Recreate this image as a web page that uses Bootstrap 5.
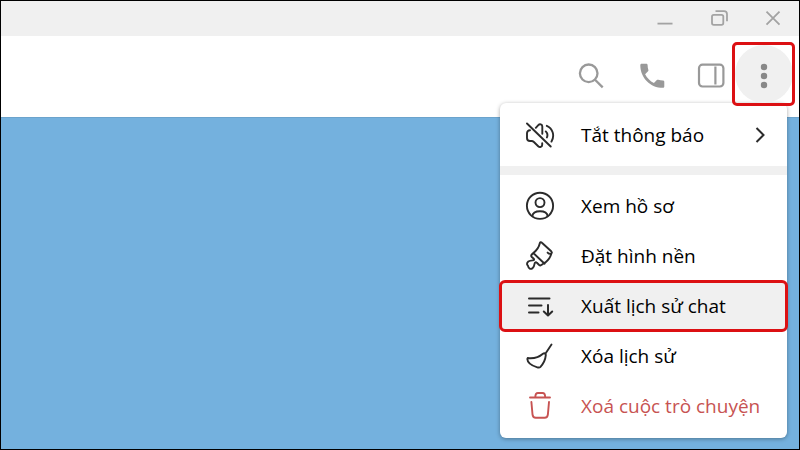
<!DOCTYPE html>
<html lang="vi">
<head>
<meta charset="utf-8">
<meta name="viewport" content="width=device-width, initial-scale=1">
<title>Chat</title>
<link href="https://cdn.jsdelivr.net/npm/bootstrap@5.3.0/dist/css/bootstrap.min.css" rel="stylesheet">
<style>
  body { font-family: "Open Sans", "Noto Sans", sans-serif; }
  .app-window { border: 1px solid #000; background: #74b1de; }
  .title-strip { background: #f0f0f0; height: 35px; padding-right: 1px; color: #a3a3a3; }
  .win-btn { width: 50px; height: 35px; color: inherit; }
  .chat-header { height: 81px; padding: 0 4px 5px 0; color: #999; }
  .chat-area { border-top: 1px solid #6ba3cc; }
  .tool-btn { width: 40px; height: 40px; color: inherit; }
  .tools { gap: 20px; margin-right: 1px; }
  .marked { outline: 3px solid #dc1013; outline-offset: -3px; border-radius: 5px; }
  .more-btn { width: 63px; height: 64px; color: #888; z-index: 2; }
  .more-dot-bg { width: 58px; height: 58px; background: #f0f0f0; }
  .chat-menu { top: 67px; right: 12px; width: 287px; border-radius: 6px; box-shadow: 0 1px 4px rgba(0, 0, 0, .35); padding: 7px 0; }
  .menu-row { height: 50px; padding: 0 20px 0 25px; gap: 26px; font-size: 19px; line-height: 28px; color: #000; }
  .menu-row svg { color: #2b2b2b; }
  .menu-row.danger, .menu-row.danger svg { color: #c75352; }
  .menu-row.marked { background: #f0f0f0; outline-offset: -2px; border-radius: 5px; }
  .menu-gap { height: 9px; margin: 6px 0; background: #f0f0f0; }
</style>
<script src="https://cdn.jsdelivr.net/npm/bootstrap@5.3.0/dist/js/bootstrap.bundle.min.js"></script>
</head>
<body>
<div class="app-window min-vh-100 d-flex flex-column">
  <div class="title-strip d-flex justify-content-end gap-1">
    <button type="button" class="win-btn btn border-0 p-0 d-flex align-items-center justify-content-center" aria-label="Minimize">
      <svg width="20" height="20" fill="none" stroke="currentColor" stroke-width="1.8"><path d="M2.5 14.6h15"/></svg>
    </button>
    <button type="button" class="win-btn btn border-0 p-0 d-flex align-items-center justify-content-center" aria-label="Restore">
      <svg width="20" height="20" fill="none" stroke="currentColor" stroke-width="1.8"><rect x="3" y="5.800" width="11.3" height="10" rx="1.8"/><path d="M6.500 2.200h8.500a3 3 0 0 1 3 3v7"/></svg>
    </button>
    <button type="button" class="win-btn btn border-0 p-0 d-flex align-items-center justify-content-center" aria-label="Close">
      <svg width="20" height="20" fill="none" stroke="currentColor" stroke-width="1.8"><path d="M3.500 2.700l13 13M16.500 2.700L3.500 15.700"/></svg>
    </button>
  </div>

  <header class="chat-header bg-white position-relative d-flex align-items-center justify-content-end">
    <div class="tools d-flex">
      <button type="button" class="tool-btn btn border-0 p-0 d-flex align-items-center justify-content-center" aria-label="Search">
        <svg width="30" height="30" fill="none" stroke="currentColor" stroke-width="2.300"><circle cx="12.700" cy="14.300" r="8.800"/><path d="M19 20.700l7.700 7.700"/></svg>
      </button>
      <button type="button" class="tool-btn btn border-0 p-0 d-flex align-items-center justify-content-center" aria-label="Call">
        <svg width="30" height="30" fill="currentColor"><path transform="translate(.3 .8) scale(1.333)" d="M6.620 10.790c1.440 2.830 3.760 5.140 6.590 6.590l2.200-2.200c.27-.27.67-.36 1.020-.24 1.120.37 2.330.57 3.570.57.550 0 1 .45 1 1V20c0 .55-.45 1-1 1C10.610 21 3 13.390 3 4c0-.55.450-1 1-1h3.500c.55 0 1 .45 1 1 0 1.250.2 2.450.57 3.570.11.350.03.740-.25 1.020l-2.200 2.200z"/></svg>
      </button>
      <button type="button" class="tool-btn btn border-0 p-0 d-flex align-items-center justify-content-center" aria-label="Side panel">
        <svg width="30" height="30" fill="none" stroke="currentColor" stroke-width="2.200"><rect x="3" y="5.700" width="24.400" height="21.800" rx="3.500"/><path d="M19.400 7.500v18"/></svg>
      </button>
    </div>
    <button type="button" class="more-btn marked btn border-0 p-0 position-relative d-flex align-items-center justify-content-center" aria-label="More" aria-expanded="true">
      <span class="more-dot-bg rounded-circle d-flex align-items-center justify-content-center">
        <svg width="10" height="30" fill="currentColor"><circle cx="5" cy="8" r="3.200"/><circle cx="5" cy="17" r="3.200"/><circle cx="5" cy="26" r="3.200"/></svg>
      </span>
    </button>

    <div class="chat-menu bg-white position-absolute">
      <button type="button" class="menu-row btn border-0 rounded-0 w-100 d-flex align-items-center text-start">
        <svg width="30" height="30" fill="none" stroke="currentColor" stroke-width="1.900" stroke-linecap="round" stroke-linejoin="round"><path d="M2 3.500L25.700 26.500M5 10.300c-2 0-3 1-3 3v4.700c0 2 1 3 3 3h1.700c1 0 1.500.4 2.200 1l4.300 4.200c1.600 1.500 4 .8 4-1.500v-1.500M10.800 7.800l2.500-2.700c1.500-1.500 4-.8 4 1.500v7.200M20.800 11.400c1.800 1.800 2 4 1.100 6.100M21.800 5.800c5.800 2.300 8.200 9.800 4.700 15.800"/></svg>
        <span class="flex-grow-1">Tắt thông báo</span>
        <svg width="14" height="20" fill="none" stroke="currentColor" stroke-width="2"><path d="M3.500 3l7 7-7 7"/></svg>
      </button>
      <div class="menu-gap"></div>
      <button type="button" class="menu-row btn border-0 rounded-0 w-100 d-flex align-items-center text-start">
        <svg width="30" height="30" fill="none" stroke="currentColor" stroke-width="1.900"><circle cx="15" cy="14.800" r="13.100"/><circle cx="15" cy="11.600" r="4.500"/><path d="M7.300 25.300c.4-3.200 3.200-5 7.700-5s7.300 1.800 7.700 5"/></svg>
        <span>Xem hồ sơ</span>
      </button>
      <button type="button" class="menu-row btn border-0 rounded-0 w-100 d-flex align-items-center text-start">
        <svg width="30" height="30" fill="none" stroke="currentColor" stroke-width="1.900" stroke-linecap="round" stroke-linejoin="round"><path d="M8.300 12c3.400-2.600 5.800-6.200 6.500-9.700.3-1.300 1.300-1.400 2.100-.6l9.300 8.600c1.200 1.200.7 2.500-.9 2.500-1 0-2-.4-2.700-1.200M26.300 12.500c-.6 3.400-2.800 6.500-6.200 9.300M8.300 12l11.300 10.700M8.300 12l-1.500 1.500c-.8.900-.8 1.700 0 2.500l1.700 1.500c1 1 .6 1.800-.7 1.900-3.600.2-5.800 1.400-5.800 3.700 0 .8.700 1 1 1.800.5 2.700 2.600 3.800 4.500 2.300 1.500-1.200 1.900-3 2.100-4.500.2-1.500 1.300-1.900 2.300-.9l2 1.900c1 .9 2 .9 2.900 0l2.800-1.900"/></svg>
        <span>Đặt hình nền</span>
      </button>
      <button type="button" class="menu-row marked btn border-0 w-100 d-flex align-items-center text-start">
        <svg width="30" height="30" fill="none" stroke="currentColor" stroke-width="2" stroke-linecap="round" stroke-linejoin="round"><path d="M4 7.500h20.500M4 14.500h12.500M4 21.500h9.500M23 14v10.300M18.800 20.500l4.200 4 4.200-4"/></svg>
        <span>Xuất lịch sử chat</span>
      </button>
      <button type="button" class="menu-row btn border-0 rounded-0 w-100 d-flex align-items-center text-start">
        <svg width="30" height="30" fill="none" stroke="currentColor" stroke-width="1.900" stroke-linecap="round" stroke-linejoin="round"><path d="M26.500 3.500l-6.300 9.500M2.700 17c6 .7 11.300-.8 15.300-4.300 1.500-1.200 3-.2 2.800 1.500-.4 4.500-2.200 8.300-5.300 11.600-.9.900-2 .9-3.200.5C6.500 24.600 2.500 21.500 2.300 18z"/></svg>
        <span>Xóa lịch sử</span>
      </button>
      <button type="button" class="menu-row danger btn border-0 rounded-0 w-100 d-flex align-items-center text-start">
        <svg width="30" height="30" fill="none" stroke="currentColor" stroke-width="1.900" stroke-linecap="round" stroke-linejoin="round"><path d="M5 6.500h20M10.300 6.300c0-3 .8-4.300 2.700-4.300h4.500c1.900 0 2.700 1.300 2.700 4.300M6.400 11l1.100 12.300c.2 2.300 1.200 3.400 3.300 3.400h8.800c2.100 0 3.100-1.100 3.300-3.400L24 11"/></svg>
        <span>Xoá cuộc trò chuyện</span>
      </button>
    </div>
  </header>

  <main class="chat-area flex-grow-1"></main>
</div>
</body>
</html>
